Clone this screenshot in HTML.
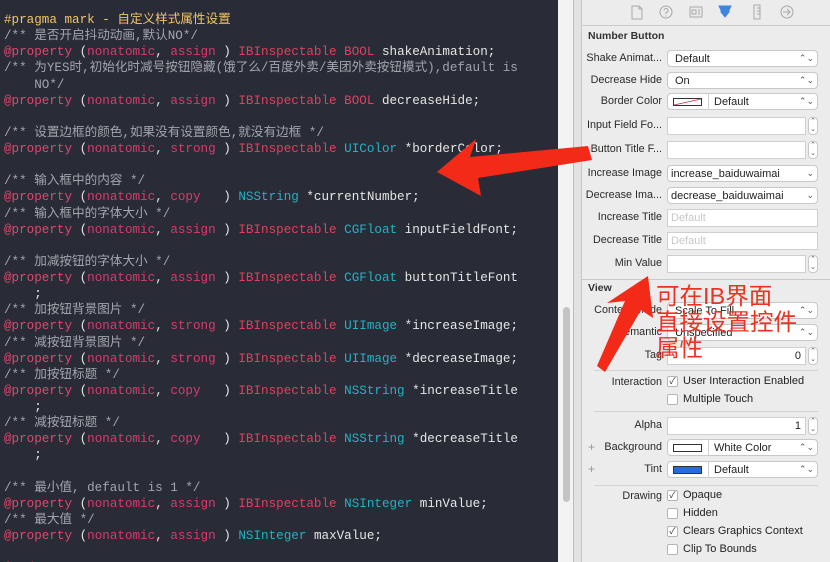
<!DOCTYPE html>
<html><head><meta charset="utf-8"><style>
*{margin:0;padding:0;box-sizing:border-box}
html,body{width:830px;height:562px;overflow:hidden}
body{position:relative;background:#ececec;font-family:"Liberation Sans","Noto Sans CJK SC",sans-serif}
#code{position:absolute;left:0;top:0;width:558px;height:562px;background:#292c37;overflow:hidden}
#code pre{position:absolute;left:4px;top:12px;font-family:"Liberation Mono","Noto Sans CJK SC",monospace;font-size:12.6px;line-height:16.13px;color:#e6e6e6;white-space:pre}
.p{color:#e2466d}.k{color:#d93a6b}.i{color:#e0405e}.t{color:#22b2c2}.c{color:#a2a5ad}.y{color:#f2c46a}
#strip{position:absolute;left:558px;top:0;width:15px;height:562px;background:#f3f3f3}
#thumb{position:absolute;left:563px;top:307px;width:7px;height:195px;background:#c4c4c4;border-radius:4px}
#gut{position:absolute;left:573px;top:0;width:9px;height:562px;background:#e2e2e2;border-left:1px solid #bdbdbd;border-right:1px solid #c8c8c8}
#panel{position:absolute;left:582px;top:0;width:248px;height:562px;background:#ececec}
.hdr{position:absolute;left:582px;top:0;width:248px;height:26px;border-bottom:1px solid #c9c9c9;background:#ececec}
.lbl{position:absolute;right:168px;font-size:10.8px;color:#2a2a2a;white-space:nowrap;text-align:right}
.sec{position:absolute;left:588px;font-size:10.5px;font-weight:bold;color:#333}
.pop{position:absolute;left:667px;width:151px;height:17px;background:#fff;border:1px solid #c8c8c8;border-radius:4px;font-size:11px;color:#222;padding-left:7px;line-height:16px}
.arr{position:absolute;right:3px;top:0;font-size:9px;color:#555;line-height:15px}
.fld{position:absolute;left:667px;width:139px;height:18px;background:#fff;border:1px solid #cfcfcf;font-size:11px;color:#222;padding-left:3px;line-height:16px}
.stp{position:absolute;left:808px;width:10px;height:18px;border:1px solid #c8c8c8;border-radius:4px;background:#fff;font-size:7px;line-height:8px;text-align:center;color:#555}
.ph{color:#c8c8c8}
.sep{position:absolute;left:594px;width:224px;height:1px;background:#d3d3d3}
.cb{position:absolute;left:667px;width:11px;height:11px;border:1px solid #b5b5b5;border-radius:2px;background:#fff;font-size:9px;line-height:9px;text-align:center;color:#333}
.ct{position:absolute;left:683px;font-size:11px;color:#222;white-space:nowrap}
.sw{position:absolute;top:4px;left:5px;width:29px;height:8px;border:1px solid #333}
.swd{position:absolute;left:40px;top:-1px;width:1px;height:17px;background:#d0d0d0}
.pl{position:absolute;left:588px;font-size:12px;color:#999}
</style></head><body>
<div id="code"><pre><span class="y">#pragma mark - 自定义样式属性设置</span>
<span class="c">/** 是否开启抖动动画,默认NO*/</span>
<span class="p">@property</span> (<span class="k">nonatomic</span>, <span class="k">assign</span> ) <span class="i">IBInspectable</span> <span class="i">BOOL</span> shakeAnimation;
<span class="c">/** 为YES时,初始化时减号按钮隐藏(饿了么/百度外卖/美团外卖按钮模式),default is</span>
<span class="c">    NO*/</span>
<span class="p">@property</span> (<span class="k">nonatomic</span>, <span class="k">assign</span> ) <span class="i">IBInspectable</span> <span class="i">BOOL</span> decreaseHide;

<span class="c">/** 设置边框的颜色,如果没有设置颜色,就没有边框 */</span>
<span class="p">@property</span> (<span class="k">nonatomic</span>, <span class="k">strong</span> ) <span class="i">IBInspectable</span> <span class="t">UIColor</span> *borderColor;

<span class="c">/** 输入框中的内容 */</span>
<span class="p">@property</span> (<span class="k">nonatomic</span>, <span class="k">copy</span>   ) <span class="t">NSString</span> *currentNumber;
<span class="c">/** 输入框中的字体大小 */</span>
<span class="p">@property</span> (<span class="k">nonatomic</span>, <span class="k">assign</span> ) <span class="i">IBInspectable</span> <span class="t">CGFloat</span> inputFieldFont;

<span class="c">/** 加减按钮的字体大小 */</span>
<span class="p">@property</span> (<span class="k">nonatomic</span>, <span class="k">assign</span> ) <span class="i">IBInspectable</span> <span class="t">CGFloat</span> buttonTitleFont
    ;
<span class="c">/** 加按钮背景图片 */</span>
<span class="p">@property</span> (<span class="k">nonatomic</span>, <span class="k">strong</span> ) <span class="i">IBInspectable</span> <span class="t">UIImage</span> *increaseImage;
<span class="c">/** 减按钮背景图片 */</span>
<span class="p">@property</span> (<span class="k">nonatomic</span>, <span class="k">strong</span> ) <span class="i">IBInspectable</span> <span class="t">UIImage</span> *decreaseImage;
<span class="c">/** 加按钮标题 */</span>
<span class="p">@property</span> (<span class="k">nonatomic</span>, <span class="k">copy</span>   ) <span class="i">IBInspectable</span> <span class="t">NSString</span> *increaseTitle
    ;
<span class="c">/** 减按钮标题 */</span>
<span class="p">@property</span> (<span class="k">nonatomic</span>, <span class="k">copy</span>   ) <span class="i">IBInspectable</span> <span class="t">NSString</span> *decreaseTitle
    ;

<span class="c">/** 最小值, default is 1 */</span>
<span class="p">@property</span> (<span class="k">nonatomic</span>, <span class="k">assign</span> ) <span class="i">IBInspectable</span> <span class="t">NSInteger</span> minValue;
<span class="c">/** 最大值 */</span>
<span class="p">@property</span> (<span class="k">nonatomic</span>, <span class="k">assign</span> ) <span class="t">NSInteger</span> maxValue;

<span class="p">@end</span></pre></div>
<div id="strip"></div><div id="thumb"></div><div id="gut"></div>
<div id="panel"></div>
<div class="hdr">
<svg width="248" height="26" style="position:absolute;left:0;top:0" fill="none" stroke="#a8a8a8" stroke-width="1">
<path d="M50 6h7l3 3v10h-10z M57 6v3h3"/>
<circle cx="84" cy="12" r="6"/><path d="M82 10.5a2 2 0 1 1 2 2v1.5 M84 15.5v1"/>
<rect x="108" y="7" width="12" height="10"/><path d="M110 10h4v4h-4z M116 10h2 M116 12h2 M116 14h2"/>
<path d="M137 6h12l-2 4v2l-4 5-4-5v-2z" fill="#3d86e0" stroke="#3d86e0"/>
<rect x="172" y="5" width="6" height="14"/><path d="M175 8h3 M175 11h3 M175 14h3"/>
<circle cx="205" cy="12" r="6"/><path d="M201 12h7 M205 9l3 3-3 3"/>
</svg></div>

<div class="sec" style="top:30px">Number Button</div>
<div class="lbl" style="top:52px">Shake Animat...</div><div class="pop" style="top:50px">Default<span class="arr">⌃⌄</span></div>
<div class="lbl" style="top:74px">Decrease Hide</div><div class="pop" style="top:72px">On<span class="arr">⌃⌄</span></div>
<div class="lbl" style="top:95px">Border Color</div><div class="pop" style="top:93px;padding-left:46px"><div class="sw"><svg width="27" height="6" style="position:absolute;left:0;top:0"><line x1="0" y1="6" x2="27" y2="0" stroke="#d24" stroke-width="0.8"/></svg></div><div class="swd"></div>Default<span class="arr">⌃⌄</span></div>
<div class="lbl" style="top:119px">Input Field Fo...</div><div class="fld" style="top:117px"></div><div class="stp" style="top:117px">⌃<br>⌄</div>
<div class="lbl" style="top:143px">Button Title F...</div><div class="fld" style="top:141px"></div><div class="stp" style="top:141px">⌃<br>⌄</div>
<div class="lbl" style="top:167px">Increase Image</div><div class="pop" style="top:165px;padding-left:3px">increase_baiduwaimai<span class="arr">⌄</span></div>
<div class="lbl" style="top:189px">Decrease Ima...</div><div class="pop" style="top:187px;padding-left:3px">decrease_baiduwaimai<span class="arr">⌄</span></div>
<div class="lbl" style="top:211px">Increase Title</div><div class="fld ph" style="top:209px;width:151px">Default</div>
<div class="lbl" style="top:234px">Decrease Title</div><div class="fld ph" style="top:232px;width:151px">Default</div>
<div class="lbl" style="top:257px">Min Value</div><div class="fld" style="top:255px"></div><div class="stp" style="top:255px">⌃<br>⌄</div>
<div class="sep" style="top:279px;left:582px;width:248px;background:#c9c9c9"></div>

<div class="sec" style="top:282px">View</div>
<div class="lbl" style="top:304px">Content Mode</div><div class="pop" style="top:302px">Scale To Fill<span class="arr">⌃⌄</span></div>
<div class="lbl" style="top:326px">Semantic</div><div class="pop" style="top:324px">Unspecified<span class="arr">⌃⌄</span></div>
<div class="lbl" style="top:349px">Tag</div><div class="fld" style="top:347px;text-align:right;padding-right:4px">0</div><div class="stp" style="top:347px">⌃<br>⌄</div>
<div class="sep" style="top:370px"></div>
<div class="lbl" style="top:376px">Interaction</div><div class="cb" style="top:376px">✓</div><div class="ct" style="top:375px">User Interaction Enabled</div>
<div class="cb" style="top:394px"></div><div class="ct" style="top:393px">Multiple Touch</div>
<div class="sep" style="top:411px"></div>
<div class="lbl" style="top:419px">Alpha</div><div class="fld" style="top:417px;text-align:right;padding-right:4px">1</div><div class="stp" style="top:417px">⌃<br>⌄</div>
<div class="pl" style="top:440px">+</div>
<div class="lbl" style="top:441px">Background</div><div class="pop" style="top:439px;padding-left:46px"><div class="sw" style="background:#fff"></div><div class="swd"></div>White Color<span class="arr">⌃⌄</span></div>
<div class="pl" style="top:462px">+</div>
<div class="lbl" style="top:463px">Tint</div><div class="pop" style="top:461px;padding-left:46px"><div class="sw" style="background:#1f6fde;border-color:#333"></div><div class="swd"></div>Default<span class="arr">⌃⌄</span></div>
<div class="sep" style="top:485px"></div>
<div class="lbl" style="top:490px">Drawing</div><div class="cb" style="top:490px">✓</div><div class="ct" style="top:489px">Opaque</div>
<div class="cb" style="top:508px"></div><div class="ct" style="top:507px">Hidden</div>
<div class="cb" style="top:526px">✓</div><div class="ct" style="top:525px">Clears Graphics Context</div>
<div class="cb" style="top:544px"></div><div class="ct" style="top:543px">Clip To Bounds</div>

<svg width="830" height="562" style="position:absolute;left:0;top:0">
<polygon points="437,172 476,139 470,157 588,146 592,160 478,178 481,196" fill="#f22a17"/>
<polygon points="648,276 653,318 641,310 605,372 597,366 625,301 607,303" fill="#f22a17"/>
</svg>
<div style="position:absolute;left:656px;top:283px;font-size:23.5px;line-height:26px;color:#ea3323;font-family:'Liberation Sans','Noto Sans CJK SC',sans-serif">可在IB界面<br>直接设置控件<br>属性</div>
</body></html>
